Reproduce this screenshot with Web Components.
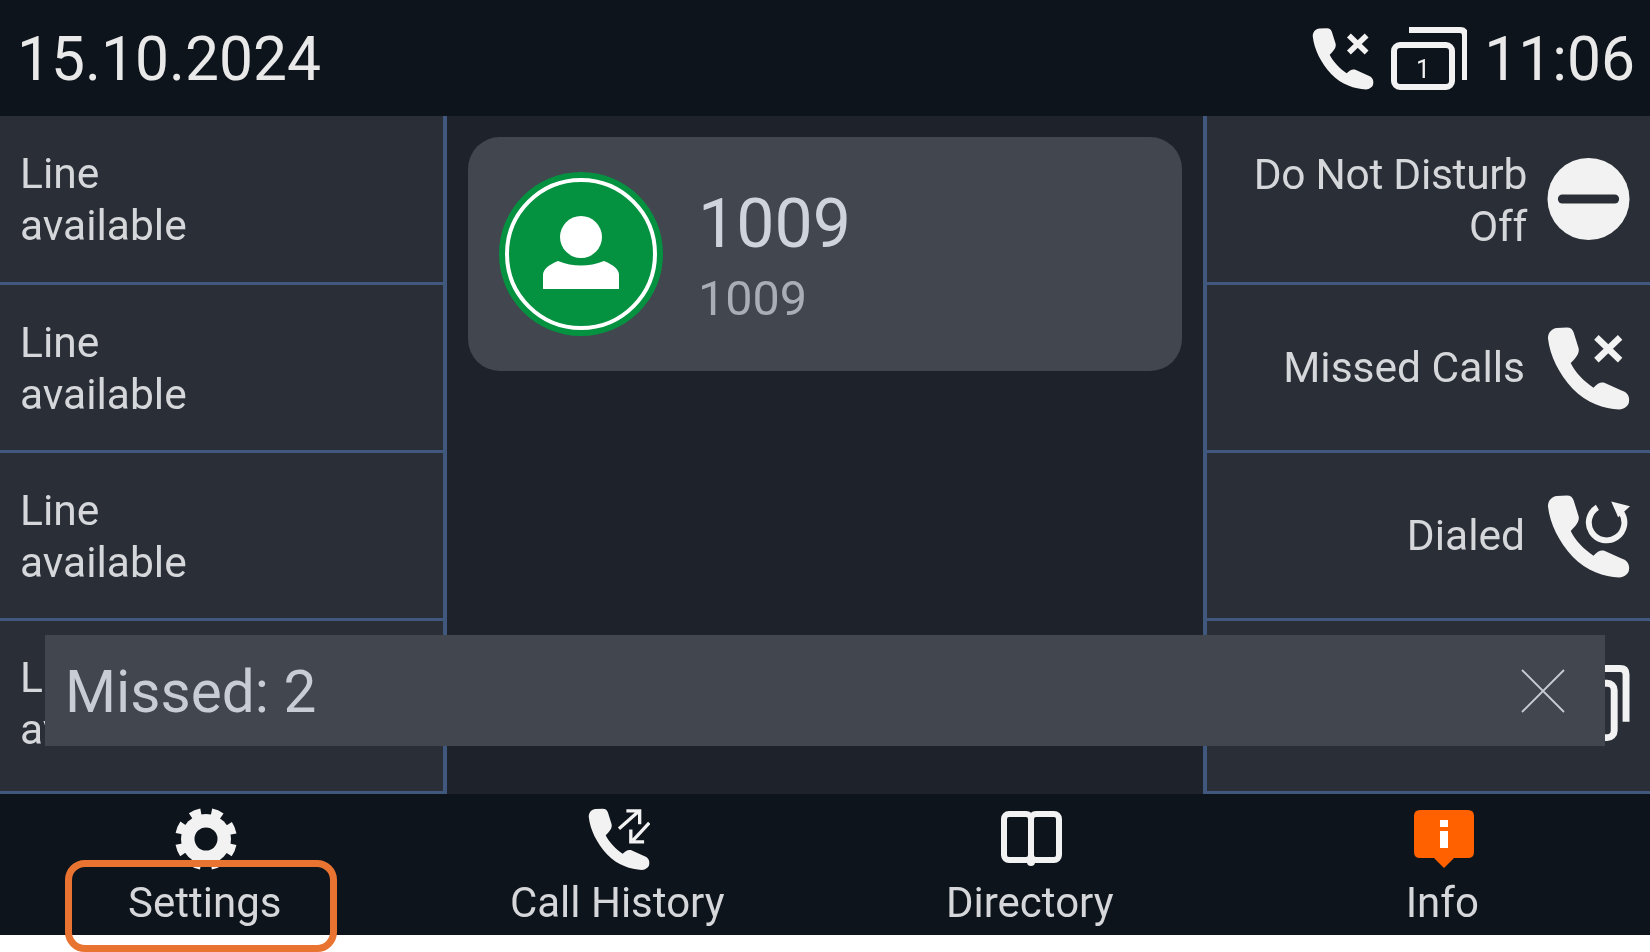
<!DOCTYPE html>
<html>
<head>
<meta charset="utf-8">
<title>Phone screen</title>
<style>
  html, body { margin: 0; background: #fff; }
  body { font-family: Roboto, "Liberation Sans", sans-serif; }
  .dnd { display: block; padding-top: 3px; margin-right: -2px; letter-spacing: -0.3px; }
</style>
</head>
<body>
<phone-screen>
  <status-bar slot="status" date="15.10.2024" time="11:06"></status-bar>

  <key-column slot="left">
    <line-key>Line<br>available</line-key>
    <line-key>Line<br>available</line-key>
    <line-key>Line<br>available</line-key>
    <line-key>Line<br>available</line-key>
  </key-column>

  <account-card slot="center" name="1009" number="1009"></account-card>

  <key-column slot="right" side="right">
    <func-key icon="dnd"><span class="dnd">Do Not Disturb<br>Off</span></func-key>
    <func-key icon="missed">Missed Calls</func-key>
    <func-key icon="dialed">Dialed</func-key>
    <func-key icon="lines"></func-key>
  </key-column>

  <missed-toast slot="overlay">Missed: 2</missed-toast>

  <soft-bar slot="soft">
    <soft-key icon="gear">Settings</soft-key>
    <soft-key icon="history">Call History</soft-key>
    <soft-key icon="book">Directory</soft-key>
    <soft-key icon="info">Info</soft-key>
  </soft-bar>

  <focus-ring slot="overlay"></focus-ring>
</phone-screen>

<script>
const HANDSET = 'M1 12C1 6 5 2 10 1.500L20 1C24 1 26 3 27 6L32 22C33 27 30 31 24 37C28 46 38 56 47 62C51 58 54 56 58 57L76 65C80 66 84 70 83 76C83 80 78 84 73 84C58 83 40 78 26 63C12 48 3 30 1 12Z';

const ICONS = {
  missed: `<svg viewBox="0 0 84 84"><path fill="#f2f2f2" d="${HANDSET}"/>
    <path fill="none" stroke="#f2f2f2" stroke-width="6.500" d="M50 11L74 34M74 11L50 34"/></svg>`,
  dialed: `<svg viewBox="0 0 84 84"><path fill="#f2f2f2" d="${HANDSET}"/>
    <path fill="none" stroke="#f2f2f2" stroke-width="6" d="M51 13A18 18 0 1 0 75 18"/>
    <path fill="#f2f2f2" d="M65 7L84 12L72 23Z"/></svg>`,
  dnd: `<svg viewBox="0 0 84 84"><circle cx="42" cy="42" r="41.500" fill="#f2f2f2"/>
    <rect x="11" y="37.500" width="62" height="9" rx="4.500" fill="#2a2f37"/></svg>`,
  lines: `<svg viewBox="0 0 84 84"><path fill="none" stroke="#f2f2f2" stroke-width="7" d="M22 4H74Q80 4 80 10V58"/>
    <rect x="3" y="19" width="65" height="55" rx="7" fill="none" stroke="#f2f2f2" stroke-width="7"/></svg>`,
  gear: `<svg viewBox="0 0 62 62"><circle cx="31" cy="31" r="25" fill="#f2f2f2"/>
    <circle cx="31" cy="31" r="27.500" fill="none" stroke="#f2f2f2" stroke-width="7" stroke-dasharray="11 10.600" stroke-dashoffset="-5.300"/>
    <circle cx="31" cy="31" r="11.500" fill="#0e141b"/></svg>`,
  history: `<svg viewBox="0 0 84 84"><path fill="#f2f2f2" d="${HANDSET}"/>
    <path fill="none" stroke="#f2f2f2" stroke-width="4.500" d="M42 28L68 5M52 4H70V22M83 20L61 44M58 29V46H76"/></svg>`,
  book: `<svg viewBox="0 0 62 62"><rect x="4" y="6" width="27" height="46" rx="5" fill="none" stroke="#f2f2f2" stroke-width="6"/>
    <rect x="31" y="6" width="28" height="46" rx="5" fill="none" stroke="#f2f2f2" stroke-width="6"/>
    <circle cx="31" cy="54" r="4" fill="#f2f2f2"/></svg>`,
  info: `<svg viewBox="0 0 62 60"><path fill="#ff6000" d="M7 1H55Q61 1 61 7V43Q61 49 55 49H41L31 59L21 49H7Q1 49 1 43V7Q1 1 7 1Z"/>
    <rect x="27" y="11" width="8" height="7" fill="#fff"/><rect x="27" y="22" width="8" height="17" fill="#fff"/></svg>`
};

class PhoneScreen extends HTMLElement {
  constructor() {
    super();
    this.attachShadow({ mode: 'open' }).innerHTML = `
    <style>
      :host { display: block; position: relative; width: 1650px; height: 952px; overflow: hidden; }
      #frame { display: flex; flex-direction: column; height: 935px; background: #0e141b; filter: blur(0.6px); }
      #main { display: grid; grid-template-columns: 447px 1fr 447px; height: 678px; }
      #center { background: #1e232b; padding: 21px 21px 0; }
    </style>
    <div id="frame">
      <slot name="status"></slot>
      <div id="main">
        <slot name="left"></slot>
        <div id="center"><slot name="center"></slot></div>
        <slot name="right"></slot>
      </div>
      <slot name="soft"></slot>
    </div>
    <slot name="overlay"></slot>
    `;
  }
}

class StatusBar extends HTMLElement {
  constructor() {
    super();
    const date = this.getAttribute('date');
    const time = this.getAttribute('time');
    this.attachShadow({ mode: 'open' }).innerHTML = `
    <style>
      :host { display: flex; align-items: center; height: 116px; padding: 0 15px 0 17px; color: #e9e9e9; font-size: 60.500px; }
      span { padding-top: 3px; }
      #date { flex: 1; }
      #phone { width: 62px; height: 63px; }
      #stack { width: 76px; height: 63px; margin: 0 17px 0 17px; }
      svg { display: block; }
    </style>
    <span id="date">${date}</span>
    <svg id="phone" viewBox="0 0 84 84"><path fill="#f2f2f2" d="${HANDSET}"/>
      <path fill="none" stroke="#f2f2f2" stroke-width="7.500" d="M50 11L74 34M74 11L50 34"/></svg>
    <svg id="stack" viewBox="0 0 76 63">
      <path fill="none" stroke="#f2f2f2" stroke-width="6" d="M18 3H69Q74 3 74 8V53"/>
      <rect x="3" y="18" width="58" height="42" rx="6" fill="none" stroke="#f2f2f2" stroke-width="6"/>
      <text x="32" y="51" text-anchor="middle" font-family="Roboto" font-size="25" fill="#f2f2f2">1</text>
    </svg>
    <span>${time}</span>
    `;
  }
}

class KeyColumn extends HTMLElement {
  constructor() {
    super();
    this.attachShadow({ mode: 'open' }).innerHTML = `
    <style>
      :host { display: grid; grid-template-rows: 169px 168px 168px 1fr; background: #2a2f37; border-right: 4px solid #41587e; }
      :host([side="right"]) { border-right: 0; border-left: 4px solid #41587e; }
    </style>
    <slot></slot>
    `;
  }
}

class LineKey extends HTMLElement {
  constructor() {
    super();
    this.attachShadow({ mode: 'open' }).innerHTML = `
    <style>
      :host { display: flex; align-items: center; padding: 2px 0 0 20px; border-bottom: 3px solid #41587e; color: #d5d7da; font-size: 42.500px; line-height: 52px; }
      :host(:last-child) { padding-top: 0; padding-bottom: 5px; }
    </style>
    <div><slot></slot></div>
    `;
  }
}

class FuncKey extends HTMLElement {
  constructor() {
    super();
    this.attachShadow({ mode: 'open' }).innerHTML = `
    <style>
      :host { display: flex; align-items: center; justify-content: flex-end; gap: 22px; padding-right: 20px; border-bottom: 3px solid #41587e; color: #d5d7da; font-size: 42.500px; line-height: 52px; text-align: right; }
      #icon { width: 83px; height: 84px; }
      svg { display: block; width: 100%; height: 100%; }
    </style>
    <div><slot></slot></div>
    <div id="icon">${ICONS[this.getAttribute('icon')]}</div>
    `;
  }
}

class AccountCard extends HTMLElement {
  constructor() {
    super();
    const name = this.getAttribute('name');
    const number = this.getAttribute('number');
    this.attachShadow({ mode: 'open' }).innerHTML = `
    <style>
      :host { display: flex; align-items: center; gap: 35px; height: 234px; padding-left: 31px; border-radius: 32px; background: #42464f; }
      svg { display: block; width: 164px; height: 164px; }
      #text { padding-top: 8px; }
      #name { color: #cfd3dc; font-size: 68px; line-height: 72px; }
      #number { margin-top: 10px; color: #a9adb5; font-size: 48.500px; line-height: 58px; }
    </style>
    <svg viewBox="-82 -82 164 164">
      <circle r="82" fill="#049140"/>
      <circle r="74" fill="none" stroke="#fff" stroke-width="4"/>
      <circle cy="-17" r="21" fill="#fff"/>
      <path fill="#fff" d="M-38 35V21Q-38 13 -23 7Q0 16 23 7Q38 13 38 21V35Z"/>
    </svg>
    <div id="text">
      <div id="name">${name}</div>
      <div id="number">${number}</div>
    </div>
    `;
  }
}

class MissedToast extends HTMLElement {
  constructor() {
    super();
    this.attachShadow({ mode: 'open' }).innerHTML = `
    <style>
      :host { position: absolute; left: 45px; top: 635px; width: 1560px; height: 111px; box-sizing: border-box; display: flex; align-items: center; justify-content: space-between; padding: 2px 40px 0 20px; background: #42464f; color: #c8ccd4; font-size: 58.500px; filter: blur(0.5px); }
      svg { display: block; width: 44px; height: 44px; margin-top: -2px; }
    </style>
    <div><slot></slot></div>
    <svg viewBox="0 0 44 44"><path fill="none" stroke="#c8ccd4" stroke-width="1.800" d="M1 1L43 43M43 1L1 43"/></svg>
    `;
  }
}

class SoftBar extends HTMLElement {
  constructor() {
    super();
    this.attachShadow({ mode: 'open' }).innerHTML = `
    <style>
      :host { display: grid; grid-template-columns: repeat(4, 1fr); flex: 1; background: #0e141b; }
    </style>
    <slot></slot>
    `;
  }
}

class SoftKey extends HTMLElement {
  constructor() {
    super();
    const icon = this.getAttribute('icon');
    this.attachShadow({ mode: 'open' }).innerHTML = `
    <style>
      :host { display: flex; flex-direction: column; align-items: center; padding-top: 13px; color: #d5d7da; font-size: 42px; line-height: 50px; }
      #icon { display: flex; justify-content: center; align-items: center; width: 64px; height: 64px; margin-bottom: 7px; }
      #label { padding-right: 3px; }
      svg { display: block; width: 62px; height: 62px; }
    </style>
    <div id="icon">${ICONS[icon]}</div>
    <div id="label"><slot></slot></div>
    `;
  }
}

// annotation drawn over the screenshot
class FocusRing extends HTMLElement {
  constructor() {
    super();
    this.attachShadow({ mode: 'open' }).innerHTML = `
    <style>
      :host { position: absolute; left: 65px; top: 860px; width: 272px; height: 92px; box-sizing: border-box; border: 7px solid #e97331; border-radius: 20px; }
    </style>
    `;
  }
}

customElements.define('phone-screen', PhoneScreen);
customElements.define('status-bar', StatusBar);
customElements.define('key-column', KeyColumn);
customElements.define('line-key', LineKey);
customElements.define('func-key', FuncKey);
customElements.define('account-card', AccountCard);
customElements.define('missed-toast', MissedToast);
customElements.define('soft-bar', SoftBar);
customElements.define('soft-key', SoftKey);
customElements.define('focus-ring', FocusRing);
</script>
</body>
</html>
